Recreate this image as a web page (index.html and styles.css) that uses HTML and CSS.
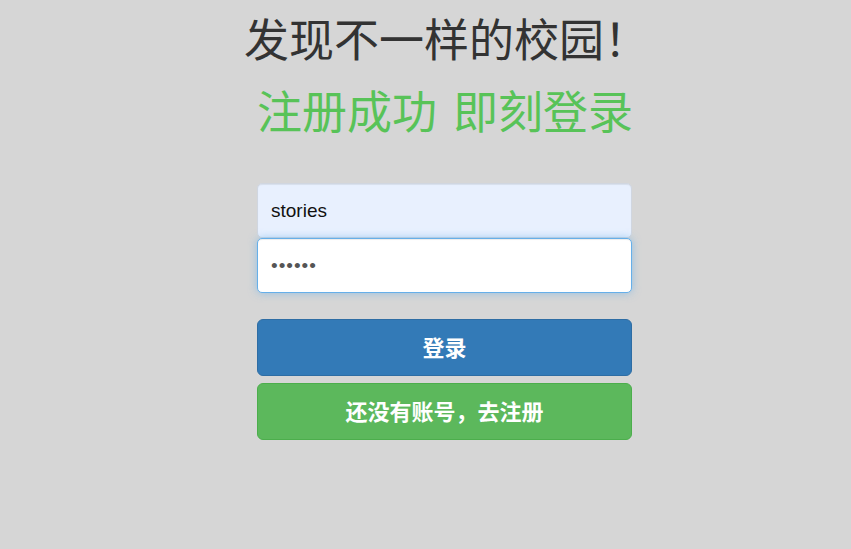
FILE: index.html
```html
<!DOCTYPE html>
<html lang="zh-CN">
<head>
    <meta charset="UTF-8">
    <meta name="viewport" content="width=device-width, initial-scale=1.0">
    <title>登录</title>
    <link rel="stylesheet" href="styles.css">
</head>
<body>
    <div class="container">
        <form class="form-signin" onsubmit="return false">
            <h1 class="slogan">发现不一样的校园！</h1>
            <h2 class="tip">注册成功 即刻登录</h2>

            <input type="text" class="form-control autofilled" value="stories">
            <input type="password" class="form-control focused" value="123456">

            <button class="btn btn-primary" type="submit">登录</button>
            <button class="btn btn-success" type="button">还没有账号，去注册</button>
        </form>
    </div>
</body>
</html>
```

FILE: styles.css
```css
/* General Styles */
body {
    margin: 0;
    padding: 0;
    background-color: #d6d6d6;
    font-family: "Liberation Sans", "Noto Sans CJK SC", sans-serif;
    color: #333;
}

.container {
    padding-left: 257px;
}

.form-signin {
    width: 375px;
}

.slogan {
    margin: 0 0 0 -13px;
    padding-top: 8px;
    font-family: "Noto Sans CJK SC", sans-serif;
    font-size: 45px;
    font-weight: 400;
    line-height: 60px;
    white-space: nowrap;
    color: #333;
}

.tip {
    margin: 12px 0 43px;
    text-align: center;
    font-family: "Noto Sans CJK SC", sans-serif;
    font-size: 45px;
    font-weight: 400;
    line-height: 60px;
    word-spacing: 6px;
    white-space: nowrap;
    color: #58c358;
}

.form-control {
    display: block;
    box-sizing: border-box;
    width: 100%;
    height: 55px;
    padding: 10px 13px;
    font-family: "Liberation Sans", sans-serif;
    font-size: 19px;
    color: #111;
    background-color: #fff;
    border: 1px solid #ccc;
    border-radius: 5px;
    box-shadow: inset 0 1px 1px rgba(0, 0, 0, 0.075);
    outline: none;
}

.autofilled {
    background-color: #e8f0fe;
    border-color: #d0d6e0;
}

.focused {
    position: relative;
    color: #555;
    border-color: #66afe9;
    box-shadow: inset 0 1px 1px rgba(0, 0, 0, 0.075), 0 0 8px rgba(102, 175, 233, 0.6);
    letter-spacing: 1px;
}

.btn {
    display: block;
    box-sizing: border-box;
    width: 100%;
    height: 57px;
    margin-top: 7px;
    padding: 0 0 4px;
    font-family: "Noto Sans CJK SC", sans-serif;
    font-size: 22px;
    font-weight: 700;
    color: #fff;
    border: 1px solid transparent;
    border-radius: 6px;
    cursor: pointer;
}

.btn-primary {
    margin-top: 26px;
    background-color: #337ab7;
    border-color: #2e6da4;
}

.btn-success {
    background-color: #5cb85c;
    border-color: #4cae4c;
}
```
